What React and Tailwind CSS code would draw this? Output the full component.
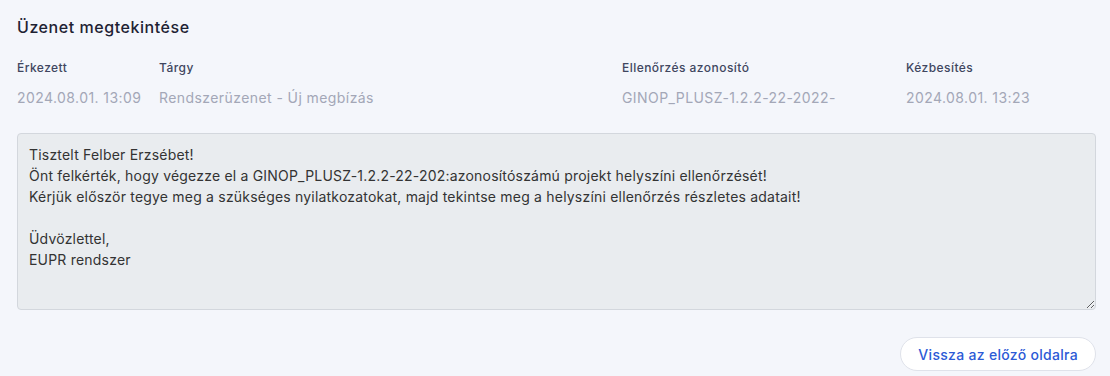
import React from 'react';

const fields = [
  { label: 'Érkezett', value: '2024.08.01. 13:09' },
  { label: 'Tárgy', value: 'Rendszerüzenet - Új megbízás' },
  { label: 'Ellenőrzés azonosító', value: 'GINOP_PLUSZ-1.2.2-22-2022-' },
  { label: 'Kézbesítés', value: '2024.08.01. 13:23' },
];

const message = `Tisztelt Felber Erzsébet!
Önt felkérték, hogy végezze el a GINOP_PLUSZ-1.2.2-22-202:azonosítószámú projekt helyszíni ellenőrzését!
Kérjük először tegye meg a szükséges nyilatkozatokat, majd tekintse meg a helyszíni ellenőrzés részletes adatait!

Üdvözlettel,
EUPR rendszer`;

export default function App() {
  return (
    <div className="min-h-[376px] bg-[#f4f6fb] pl-[17px] pr-[14px] pt-[17px] font-['Inter',sans-serif]">
      <h1 className="text-[16px] font-medium tracking-[0.55px] text-[#1e2233] leading-5">Üzenet megtekintése</h1>

      <div className="mt-[23px] grid grid-cols-[142px_463px_284px_1fr]">
        {fields.map((f) => (
          <div key={f.label}>
            <div className="text-[12px] font-medium tracking-[0.45px] text-[#40465f] leading-4">{f.label}</div>
            <div className="mt-[12px] text-[14px] tracking-[0.42px] text-[#a3a7b7] leading-5 whitespace-nowrap">{f.value}</div>
          </div>
        ))}
      </div>

      <textarea
        readOnly
        defaultValue={message}
        className="mt-[25px] block w-full h-[177px] rounded-[4px] border border-[#d3d7dd] bg-[#e9ecef] px-[11px] pt-[10px] pb-[8px] text-[14px] tracking-[0.2px] leading-[21px] text-[#333333] outline-none"
      />

      <div className="mt-[27px] flex justify-end">
        <button className="h-[34px] rounded-full border border-[#dfe2ea] bg-white px-[17px] text-[14px] font-medium tracking-[0.3px] text-[#2c5ad6]">
          Vissza az előző oldalra
        </button>
      </div>
    </div>
  );
}
